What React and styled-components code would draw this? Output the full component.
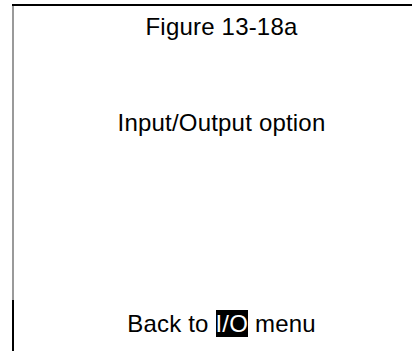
import React from 'react';
import styled, { createGlobalStyle } from 'styled-components';

const GlobalStyle = createGlobalStyle`
  body {
    margin: 0;
    padding: 0;
    background: #ffffff;
    font-family: 'Liberation Sans', Arial, sans-serif;
    color: #000;
    overflow: hidden;
  }
`;

const Frame = styled.div`
  margin: 4px 0 0 12px;
  width: 417px;
  height: 347px;
  border-top: 2px solid #000;
  display: flex;
  flex-direction: column;
  box-sizing: border-box;
`;

const Panel = styled.div`
  flex: ${(p) => (p.grow ? 1 : 'none')};
  border-left: 2px solid ${(p) => (p.dark ? '#000' : '#9a9a9a')};
  display: flex;
  flex-direction: column;
  align-items: center;
  padding: ${(p) => p.pad || '0'};
`;

const Line = styled.div`
  font-size: 24px;
  line-height: 28px;
  letter-spacing: 0.2px;
  margin-top: ${(p) => p.top || '0'};
`;

const Key = styled.span`
  background: #000;
  color: #fff;
`;

export default function App() {
  return (
    <>
      <GlobalStyle />
      <Frame>
        <Panel grow pad="7px 0 0">
          <Line>Figure 13-18a</Line>
          <Line top="68px">Input/Output option</Line>
        </Panel>
        <Panel dark pad="10px 0 13px">
          <Line>
            Back to <Key>I/O</Key> menu
          </Line>
        </Panel>
      </Frame>
    </>
  );
}
